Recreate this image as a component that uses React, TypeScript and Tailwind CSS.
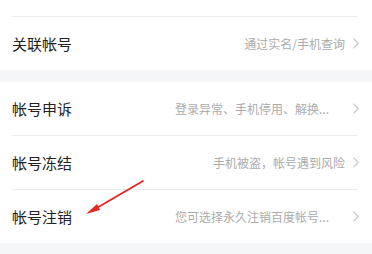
import { FC } from 'react'

type Row = { title: string; desc: string; truncated?: boolean }

const Chevron: FC = () => (
	<svg width="6" height="11" viewBox="0 0 6 11" className="ml-[8px] shrink-0">
		<path d="M0.6 0.6 L5.2 5.5 L0.6 10.4" fill="none" stroke="#c4c4c4" strokeWidth="1.1" />
	</svg>
)

const ListRow: FC<{ row: Row }> = ({ row }) => (
	<div className="h-[53px] flex items-center justify-between pl-3 pr-[13px]">
		<span className="text-[15px] text-[#222] leading-none">{row.title}</span>
		<div className="flex items-center">
			<span
				className={`text-[12px] text-[#ababab] leading-none whitespace-nowrap ${
					row.truncated ? 'mr-[16px]' : ''
				}`}
			>
				{row.desc}
			</span>
			<Chevron />
		</div>
	</div>
)

const Divider: FC = () => <div className="h-px bg-[#eeeeee] ml-3 mr-[14px]" />

const rows: Row[] = [
	{ title: '帐号申诉', desc: '登录异常、手机停用、解换...', truncated: true },
	{ title: '帐号冻结', desc: '手机被盗，帐号遇到风险' },
	{ title: '帐号注销', desc: '您可选择永久注销百度帐号...', truncated: true },
]

const App: FC = () => {
	return (
		<div
			className="relative w-[372px] h-[254px] overflow-hidden bg-[#f5f6f8]"
			style={{ fontFamily: '"Noto Sans CJK SC", "Noto Sans", sans-serif' }}
		>
			<div className="bg-white">
				<div className="h-[16px]" />
				<Divider />
				<ListRow row={{ title: '关联帐号', desc: '通过实名/手机查询' }} />
			</div>
			<div className="h-[12px]" />
			<div className="bg-white">
				<ListRow row={rows[0]} />
				<Divider />
				<ListRow row={rows[1]} />
				<Divider />
				<ListRow row={rows[2]} />
			</div>

			{/* red annotation arrow */}
			<svg
				className="absolute left-0 top-0 pointer-events-none"
				width="372"
				height="254"
				viewBox="0 0 372 254"
			>
				<line x1="143" y1="181" x2="95" y2="209" stroke="#e3261f" strokeWidth="1.8" strokeLinecap="round" />
				<path d="M86 214 L97 204 L100 210 Z" fill="#e3261f" />
			</svg>
		</div>
	)
}

export default App
